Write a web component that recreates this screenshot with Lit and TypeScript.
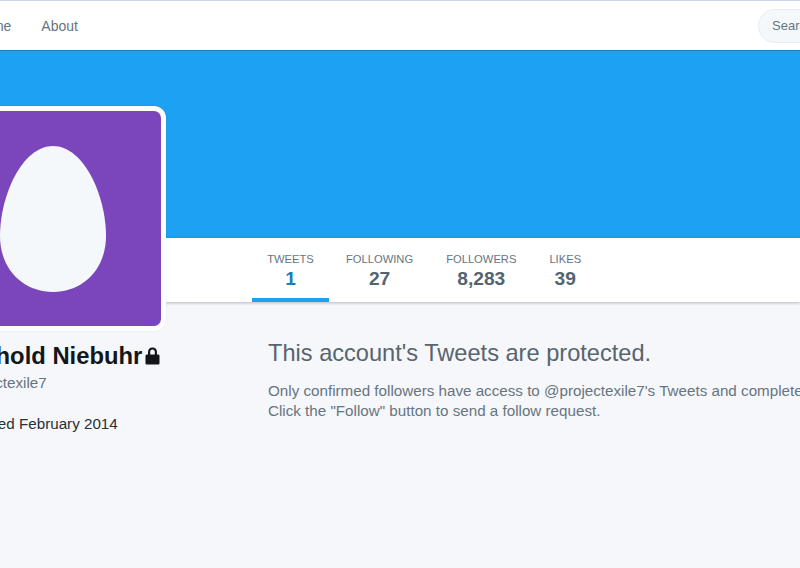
import { LitElement, html, css } from "lit";
import { customElement } from "lit/decorators.js";

@customElement("app-root")
export class AppRoot extends LitElement {
  static styles = css`
    :host {
      display: block;
      width: 800px;
      height: 568px;
      overflow: hidden;
      position: relative;
      background: #f6f7fb;
      font-family: "Liberation Sans", Arial, sans-serif;
      color: #14171a;
    }
    .nav {
      height: 49px;
      background: #fff;
      border-top: 1px solid #c9d5e6;
      border-bottom: 1px solid #1b7fbd;
      display: flex;
      align-items: center;
      justify-content: space-between;
    }
    .links {
      display: flex;
      gap: 30px;
      margin-left: -26px;
      font-size: 14px;
      color: #66757f;
      margin-top: 1px;
    }
    .search {
      width: 80px;
      margin-right: -38px;
      height: 34px;
      box-sizing: border-box;
      border: 1px solid #e6ecf0;
      border-radius: 17px;
      background: #f5f8fa;
      color: #66757f;
      font-size: 13px;
      line-height: 32px;
      padding-left: 13px;
      white-space: nowrap;
      overflow: hidden;
    }
    .banner {
      height: 187px;
      background: #1da1f2;
    }
    .statsbar {
      height: 64px;
      background: #fff;
      box-shadow: 0 1px 3px rgba(0, 0, 0, 0.25);
      display: flex;
      gap: 1px;
      padding-left: 252px;
    }
    .stat {
      display: flex;
      flex-direction: column;
      align-items: center;
      padding: 14px 16px 0;
      height: 64px;
      box-sizing: border-box;
      color: #66757f;
    }
    .stat.active {
      border-bottom: 4px solid #1da1f2;
      width: 77px;
      padding: 14px 0 0;
    }
    .label {
      font-size: 11.2px;
      line-height: 14px;
      white-space: nowrap;
    }
    .value {
      font-size: 19.2px;
      font-weight: 700;
      line-height: 24px;
      margin-top: 1px;
      color: #536471;
    }
    .active .value { color: #1b7fb5; }
    .avatar {
      position: absolute;
      left: -62px;
      top: 106px;
      width: 228px;
      height: 225px;
      box-sizing: border-box;
      background: #7b45bb;
      border: 5px solid #fff;
      border-radius: 12px;
      display: flex;
      align-items: center;
      justify-content: center;
      box-shadow: 0 0 2px rgba(0, 0, 0, 0.08);
    }
    .avatar svg { display: block; margin-left: 2px; }
    .main {
      display: flex;
      align-items: flex-start;
    }
    .side {
      width: 306px;
      margin-left: -38px;
      padding-top: 41px;
      flex: none;
      box-sizing: border-box;
      white-space: nowrap;
    }
    .name {
      font-size: 23.8px;
      font-weight: 700;
      line-height: 26px;
      display: flex;
      align-items: center;
      gap: 3px;
      margin-left: -18px;
    }
    .handle {
      font-size: 15.2px;
      color: #66757f;
      line-height: 20px;
      margin-top: 4px;
      margin-left: -16px;
    }
    .joined {
      font-size: 15.2px;
      line-height: 20px;
      color: #292f33;
      margin-top: 21px;
      margin-left: 8px;
    }
    .content {
      padding-top: 37px;
      white-space: nowrap;
    }
    h2 {
      margin: 0;
      font-size: 23.6px;
      font-weight: 400;
      line-height: 28px;
      color: #57656f;
    }
    p {
      margin: 14px 0 0;
      font-size: 15.2px;
      line-height: 20px;
      color: #66757f;
    }
  `;

  render() {
    return html`
      <div class="nav">
        <div class="links"><span>Home</span><span>About</span></div>
        <div class="search">Search</div>
      </div>
      <div class="banner"></div>
      <div class="statsbar">
        ${[
          ["TWEETS", "1", true],
          ["FOLLOWING", "27", false],
          ["FOLLOWERS", "8,283", false],
          ["LIKES", "39", false],
        ].map(
          ([l, v, a]) => html`<div class="stat ${a ? "active" : ""}">
            <span class="label">${l}</span><span class="value">${v}</span>
          </div>`
        )}
      </div>
      <div class="main">
        <div class="side">
          <div class="name">
            <span>Reinhold Niebuhr</span>
            <svg width="15" height="18" viewBox="0 0 15 18">
              <path
                fill="#14171a"
                fill-rule="evenodd"
                d="M7.5 0.5C4.6 0.5 3 2.6 3 5.2V7.5H2C1 7.5 0.5 8.1 0.5 9V16C0.5 17 1 17.5 2 17.5H13C14 17.5 14.5 17 14.5 16V9C14.5 8.1 14 7.5 13 7.5H12V5.2C12 2.6 10.4 0.5 7.5 0.5ZM7.5 2.6C9 2.6 9.8 3.7 9.8 5.2V7.5H5.2V5.2C5.2 3.7 6 2.6 7.5 2.6Z"
              />
            </svg>
          </div>
          <div class="handle">@projectexile7</div>
          <div class="joined">Joined February 2014</div>
        </div>
        <div class="content">
          <h2>This account's Tweets are protected.</h2>
          <p>
            Only confirmed followers have access to @projectexile7's Tweets and complete profile.<br />
            Click the "Follow" button to send a follow request.
          </p>
        </div>
      </div>
      <div class="avatar">
        <svg width="106" height="146" viewBox="0 0 106 146">
          <path
            fill="#f5f8fa"
            d="M53 0C84 0 106 50 106 90C106 124 82 146 53 146C24 146 0 124 0 90C0 50 22 0 53 0Z"
          />
        </svg>
      </div>
    `;
  }
}
